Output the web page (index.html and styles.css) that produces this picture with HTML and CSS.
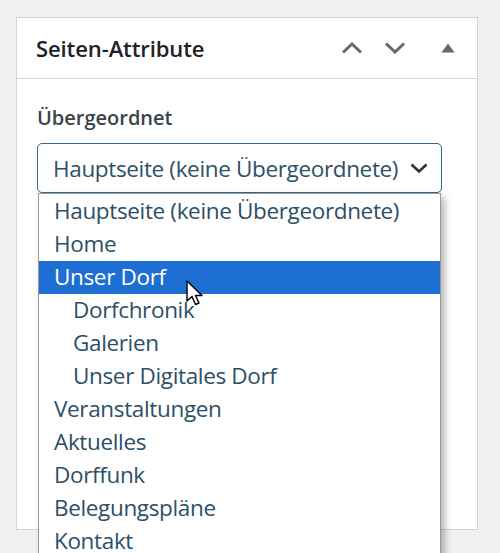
FILE: index.html
```html
<!DOCTYPE html>
<html lang="de">
<head>
<meta charset="utf-8">
<title>Seiten-Attribute</title>
<link rel="stylesheet" href="styles.css">
</head>
<body>
<div class="panel">
  <div class="panel-head">
    <h2 class="title">Seiten-Attribute</h2>
    <div class="controls">
      <svg class="ico" width="22" height="12" viewBox="0 0 22 12"><path d="M2 10.5 L11 2 L20 10.5" fill="none" stroke="#646970" stroke-width="3"/></svg>
      <svg class="ico" width="22" height="12" viewBox="0 0 22 12"><path d="M2 1.5 L11 10 L20 1.5" fill="none" stroke="#646970" stroke-width="3"/></svg>
      <svg class="ico tri" width="14" height="10" viewBox="0 0 14 10"><path d="M7 0.5 L13.5 9.5 L0.5 9.5 Z" fill="#646970"/></svg>
    </div>
  </div>
  <div class="panel-body">
    <div class="label">Übergeordnet</div>
    <div class="select-wrap">
      <div class="select">
        <span>Hauptseite (keine Übergeordnete)</span>
        <svg width="18" height="11" viewBox="0 0 18 11"><path d="M1.5 1.5 L9 8.5 L16.5 1.5" fill="none" stroke="#2c3338" stroke-width="2.6"/></svg>
      </div>
      <ul class="dropdown">
        <li>Hauptseite (keine Übergeordnete)</li>
        <li>Home</li>
        <li class="active">Unser Dorf</li>
        <li class="sub">Dorfchronik</li>
        <li class="sub">Galerien</li>
        <li class="sub">Unser Digitales Dorf</li>
        <li>Veranstaltungen</li>
        <li>Aktuelles</li>
        <li>Dorffunk</li>
        <li>Belegungspläne</li>
        <li>Kontakt</li>
      </ul>
      <svg class="cursor" width="19" height="27" viewBox="0 0 19 27"><path d="M1 1 L1 21 L6 16.5 L9.5 24.5 L13 23 L9.5 15.5 L16 15.5 Z" fill="#fff" stroke="#000" stroke-width="1.4" stroke-linejoin="round"/></svg>
    </div>
  </div>
</div>
</body>
</html>
```
FILE: styles.css
```css
* { box-sizing: border-box; }
html, body { margin: 0; padding: 0; }
body {
  background: #f0f0f1;
  font-family: "Open Sans", "Noto Sans", sans-serif;
  width: 500px;
  height: 553px;
  overflow: hidden;
  padding: 17px 0 0 16px;
}
.panel {
  width: 462px;
  height: 513px;
  background: #fff;
  border: 1px solid #d2d3d5;
}
.panel-head {
  height: 61px;
  border-bottom: 1px solid #d2d3d5;
  display: flex;
  align-items: center;
  padding: 0 22px 0 19px;
}
.title {
  margin: 0;
  flex: 1;
  font-size: 22px;
  font-weight: 600;
  color: #1d2327;
  letter-spacing: -0.1px;
}
.controls {
  display: flex;
  align-items: center;
  gap: 21px;
}
.ico { display: block; }
.tri { margin-left: 14px; }
.panel-body {
  padding: 26px 0 0 20px;
}
.label {
  font-size: 20px;
  font-weight: 600;
  color: #3c434a;
  line-height: 26px;
  margin-bottom: 12px;
}
.select-wrap {
  position: relative;
  width: 405px;
}
.select {
  height: 50px;
  border: 1.5px solid #3a6686;
  border-radius: 5px;
  display: flex;
  align-items: center;
  justify-content: space-between;
  padding: 0 13px 0 15px;
  font-size: 22.5px;
  color: #2c4f66;
  letter-spacing: -0.35px;
}
.dropdown {
  position: absolute;
  left: 1px;
  top: 50px;
  width: 403px;
  margin: 0;
  padding: 1px 0 0;
  list-style: none;
  background: #fff;
  border: 1px solid #9a9a9a;
  box-shadow: 4px 4px 7px rgba(0,0,0,0.28);
}
.dropdown li {
  height: 33px;
  line-height: 31px;
  padding-left: 15px;
  font-size: 22.5px;
  color: #2c4f66;
  letter-spacing: -0.35px;
  white-space: nowrap;
}
.dropdown li.active { line-height: 31px; }
.dropdown li.sub { padding-left: 34px; }
.dropdown li.active {
  background: #1d6fd3;
  color: #fff;
}
.cursor {
  position: absolute;
  left: 149px;
  top: 137px;
}
```
